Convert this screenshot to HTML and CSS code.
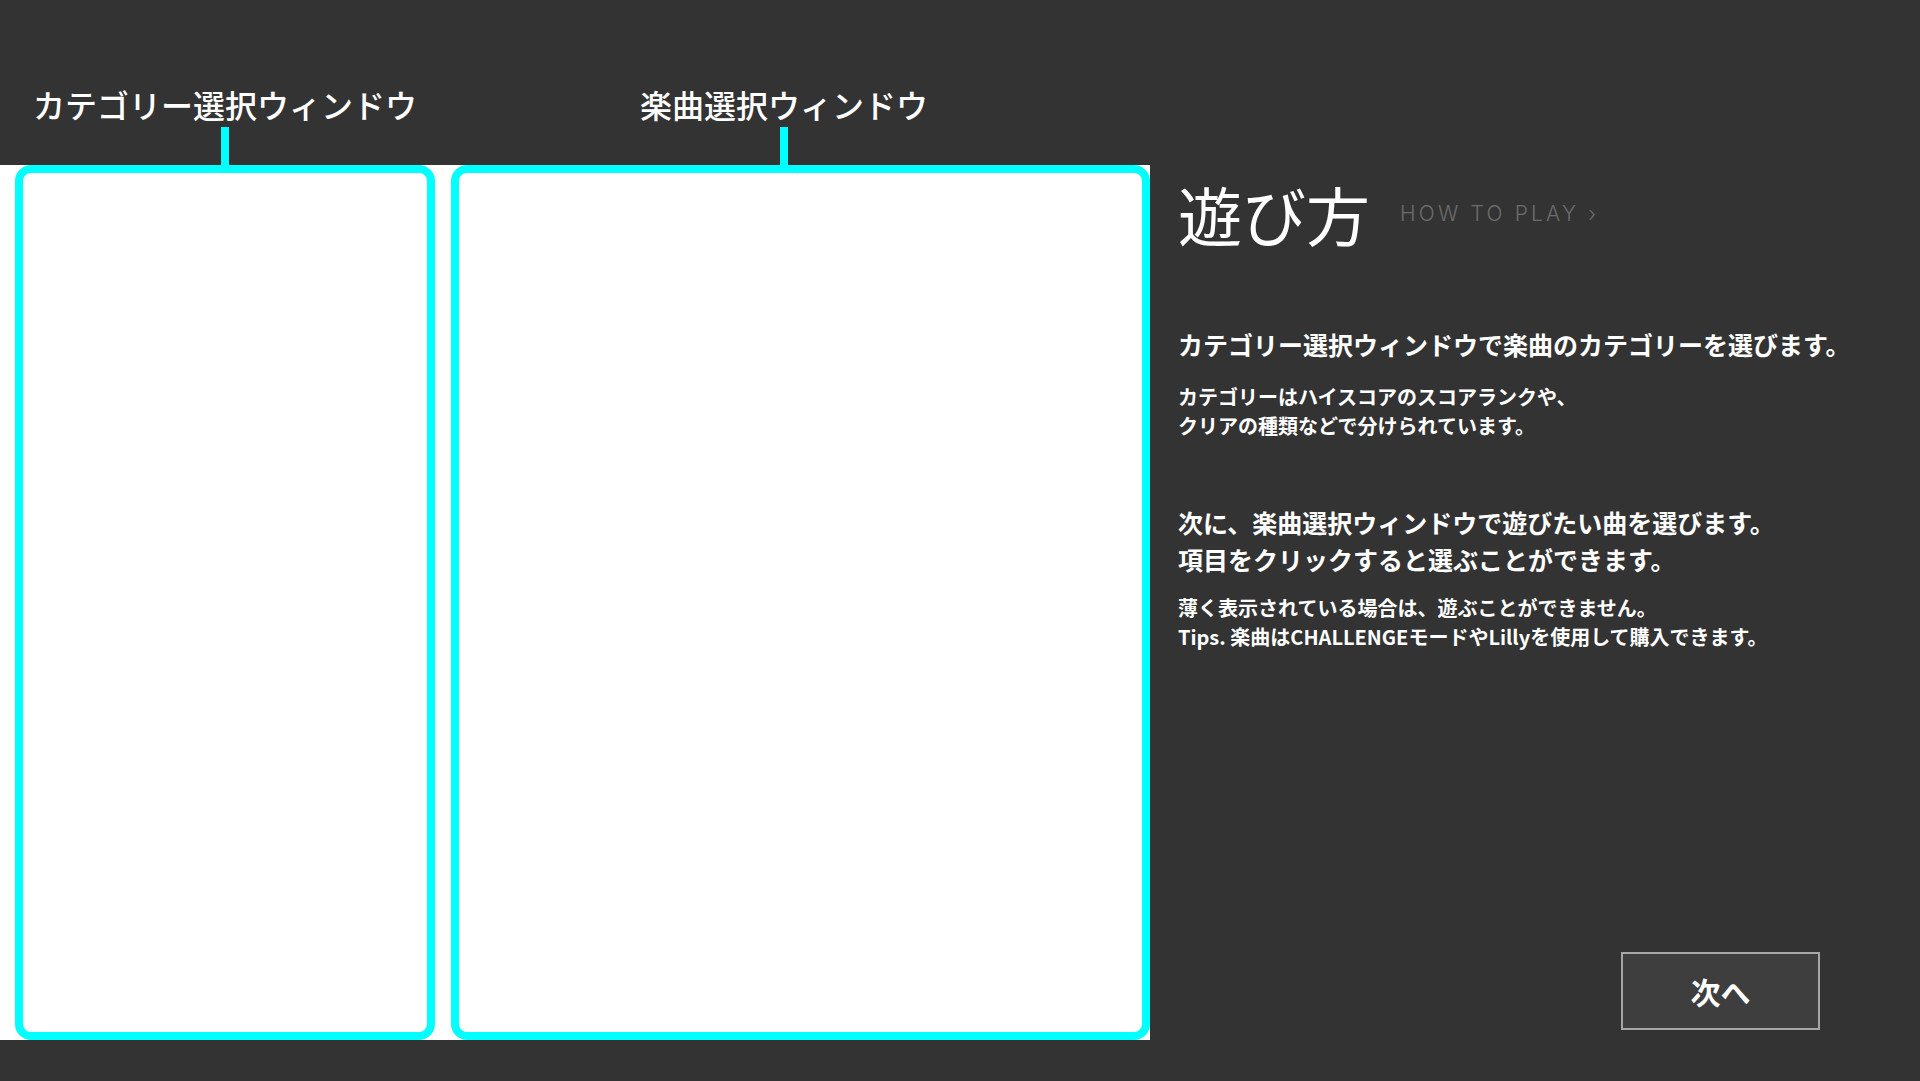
FILE: index.html
```html
<!DOCTYPE html>
<html lang="ja">
<head>
<meta charset="utf-8">
<title>遊び方</title>
<link rel="stylesheet" href="styles.css">
</head>
<body>
<div class="screen">
  <header class="labels">
    <div class="label label-category">
      <span class="label-text">カテゴリー選択ウィンドウ</span>
      <span class="stem"></span>
    </div>
    <div class="label label-music">
      <span class="label-text">楽曲選択ウィンドウ</span>
      <span class="stem"></span>
    </div>
  </header>
  <main class="main">
    <section class="windows">
      <div class="win win-category"></div>
      <div class="win win-music"></div>
    </section>
    <aside class="guide">
      <div class="title-row">
        <h1 class="title">遊び方</h1>
        <span class="subtitle">HOW TO PLAY ›</span>
      </div>
      <p class="lead lead-1">カテゴリー選択ウィンドウで楽曲のカテゴリーを選びます。</p>
      <p class="note note-1">カテゴリーはハイスコアのスコアランクや、<br>クリアの種類などで分けられています。</p>
      <p class="lead lead-2">次に、楽曲選択ウィンドウで遊びたい曲を選びます。<br>項目をクリックすると選ぶことができます。</p>
      <p class="note note-2">薄く表示されている場合は、遊ぶことができません。<br>Tips. 楽曲はCHALLENGEモードやLillyを使用して購入できます。</p>
      <button class="next" type="button">次へ</button>
    </aside>
  </main>
  <div class="bottom"></div>
</div>
</body>
</html>
```
FILE: styles.css
```css
* { box-sizing: border-box; }
html, body {
  margin: 0;
  padding: 0;
  background: #333333;
}
body {
  width: 1920px;
  height: 1081px;
  overflow: hidden;
  font-family: "Noto Sans CJK JP", "Noto Sans", sans-serif;
  color: #ffffff;
}
.screen {
  display: flex;
  flex-direction: column;
  height: 1081px;
}

/* top labels */
.labels {
  height: 165px;
  display: flex;
  align-items: flex-end;
  padding-left: 33px;
}
.label {
  display: flex;
  flex-direction: column;
  align-items: center;
}
.label-music {
  margin-left: 223px;
}
.label-text {
  font-size: 32px;
  line-height: 40px;
  font-weight: 500;
  white-space: nowrap;
}
.stem {
  display: block;
  width: 8px;
  height: 38px;
  margin-top: 3px;
  background: #00ffff;
}

/* main */
.main {
  display: flex;
  height: 875px;
}
.windows {
  width: 1150px;
  background: #ffffff;
  display: flex;
  gap: 16px;
  padding-left: 15px;
}
.win {
  height: 875px;
  border: 8px solid #00ffff;
  border-radius: 16px;
  background: #ffffff;
}
.win-category { width: 420px; }
.win-music { width: 699px; }

.guide {
  flex: 1;
  display: flex;
  flex-direction: column;
  padding: 8px 0 10px 28px;
}
.title-row {
  display: flex;
  align-items: center;
  height: 80px;
}
.title {
  margin: 0;
  font-size: 64px;
  line-height: 80px;
  font-weight: 400;
  white-space: nowrap;
}
.subtitle {
  margin-left: 30px;
  margin-top: 0;
  font-family: "Inter", "Lato", sans-serif;
  font-weight: 300;
  font-size: 21px;
  letter-spacing: 3.2px;
  color: #6c6c6c;
  white-space: nowrap;
}
.lead {
  margin: 0;
  font-size: 25px;
  font-weight: 700;
  white-space: nowrap;
}
.note {
  margin: 0;
  font-size: 20px;
  line-height: 29px;
  font-weight: 700;
  white-space: nowrap;
}
.lead-1 {
  margin-top: 73px;
  line-height: 36px;
}
.note-1 {
  margin-top: 20px;
}
.lead-2 {
  margin-top: 64px;
  line-height: 37px;
}
.note-2 {
  margin-top: 15px;
}
.next {
  margin-top: auto;
  align-self: flex-end;
  margin-right: 100px;
  width: 199px;
  height: 78px;
  background: #3e3e3e;
  border: 2px solid #a6a6a6;
  color: #ffffff;
  font-family: "Noto Sans CJK JP", sans-serif;
  font-size: 30px;
  font-weight: 700;
  padding: 0;
}
.bottom {
  height: 41px;
}
```
